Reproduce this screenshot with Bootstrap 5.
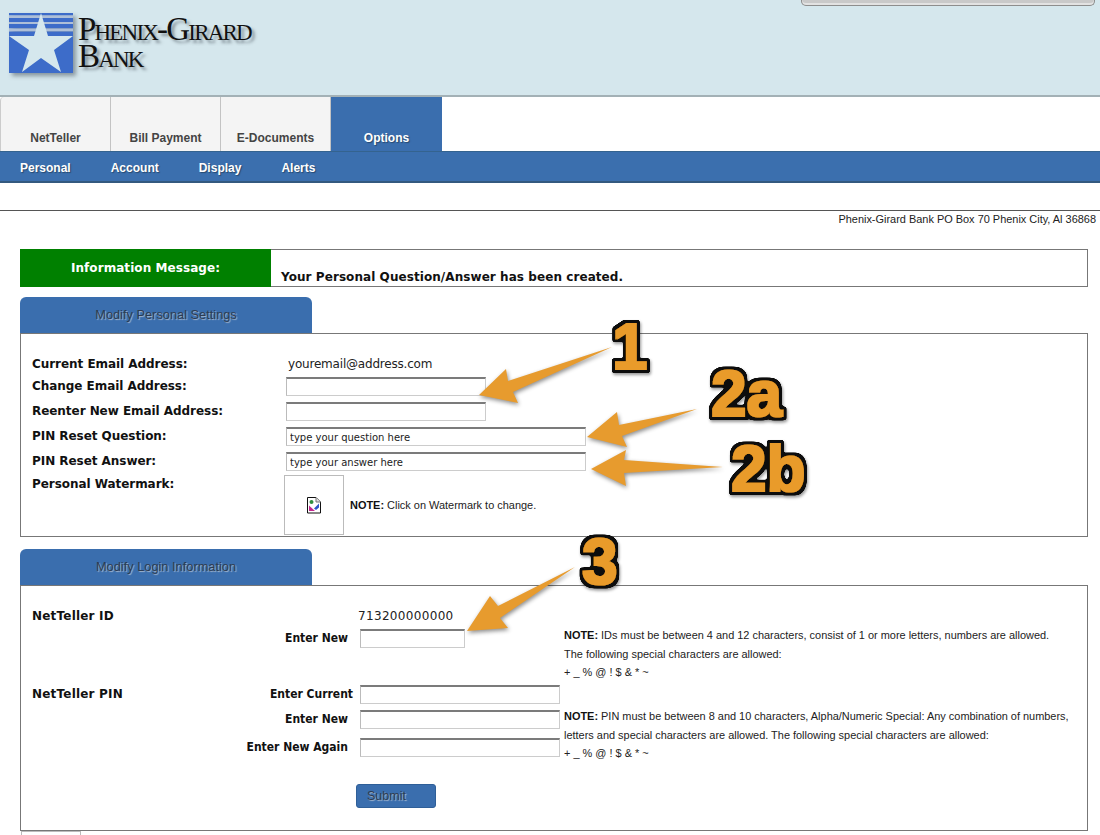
<!DOCTYPE html>
<html lang="en">
<head>
<meta charset="utf-8">
<title>Phenix-Girard Bank</title>
<link rel="stylesheet" href="https://cdn.jsdelivr.net/npm/bootstrap@5.3.0/dist/css/bootstrap.min.css">
<style>
html,body{height:835px;overflow:hidden;background:#fff;margin:0}
body{font-family:"Liberation Sans",Arial,sans-serif;color:#111;position:relative}
.pg-head{height:97px;background:#d5e7ed;border-bottom:2px solid #a3b1b6}
.logo-mark{width:76px;height:70px;margin:11px 0 0 9px;filter:drop-shadow(3px 3px 2px rgba(60,70,80,.5));flex:none}
.logo-text{font-family:"Liberation Serif",serif;color:#111;font-variant:small-caps;font-size:33px;line-height:27px;letter-spacing:-1.8px;margin:16px 0 0 -7px;text-shadow:3px 3px 3px rgba(60,70,80,.5)}
.search-stub{width:294px;height:6px;margin:0 5px 0 auto;background:#c9c9c9;border:1px solid #8d8d8d;border-top:0;border-radius:0 0 5px 5px;box-shadow:inset 0 -2px 0 #e2e2e2}
.tab-bar{height:54px;padding-left:0;margin:0}
.tab-item{width:110px;height:54px;background:#f4f4f4;border-right:1px solid #c3c3c3;font-weight:700;font-size:12px;color:#444;text-align:center;padding:28px 0 0;line-height:26px}
.tab-item:first-child{border-left:1px solid #ccc;border-radius:4px 0 0 0;width:111px}
.tab-active{background:#3a6eae;color:#fff;text-shadow:1px 1px 1px #27496f;border-right:0;width:111px}
.sub-bar{height:32px;background:#3b6fae;border-bottom:2px solid #33597f;border-top:1px solid #34638f}
.sub-link{font-weight:700;font-size:12px;color:#fff;text-shadow:1px 1px 1px #27496f;line-height:32px;margin-left:40px}
.sub-link:first-child{margin-left:20px}
.addr-line{margin-top:27px;border-top:1px solid #555;font-size:10.95px;text-align:right;padding:1px 4px 0 0;line-height:14px;color:#222;height:39px}
.wrap{margin:0 12px 0 20px}
.msg-box{height:38px;border:1px solid #777;font-family:"DejaVu Sans",Verdana,sans-serif;font-weight:700;font-size:12px;letter-spacing:.07px}
.msg-title{width:251px;background:#008000;color:#fff;text-align:center;line-height:15px;padding-top:12px;margin:-1px 0 -1px -1px;box-sizing:content-box;height:26px;flex:none}
.msg-text{padding:20px 0 0 10px;line-height:15px;color:#111}
.sec-tab{width:292px;height:36px;margin-top:10px;background:#3a6eae;border-radius:6px 6px 0 0;text-align:center;font-size:12.8px;line-height:35px;color:#2c3c52;text-shadow:1px 1px 1px #a9bacf}
.sec-tab.second{margin-top:12px}
.sec-box{border:1px solid #777;padding:19px 0 0 11px}
.sec-one{height:204px}
.sec-two{height:246px}
.lab{font-family:"DejaVu Sans",Verdana,sans-serif;font-weight:700;font-size:12px;line-height:20px;color:#111;margin-top:1px;letter-spacing:-.05px}
.val{font-family:"DejaVu Sans",Verdana,sans-serif;font-size:12px;line-height:20px;color:#222;margin-top:1px}
.val-mail{letter-spacing:-.2px;margin-left:2px}
.val-id{letter-spacing:.33px;margin-left:-2px}
.lab-name{letter-spacing:.2px}
.lab-enter{font-family:"DejaVu Sans Condensed","DejaVu Sans",sans-serif;letter-spacing:0}
.fld{display:block;padding:0 3px;height:19px;font-family:"DejaVu Sans",Verdana,sans-serif;font-size:10px;color:#222;border:1px solid #ccc;border-top:2px solid #7b7b7b;border-left-color:#bbb;border-radius:0;background:#fff;box-shadow:none;margin-top:2px}
.w200{width:200px}.w300{width:300px}.w105{width:105px}
.row-a{height:22px}
.row-b{height:25px}
.c-label{width:254px;flex:none}
.lab-wm{margin-top:-1px}
.wm-box{width:60px;height:60px;border:1px solid #bbb;margin-left:-2px}
.note{font-size:10.95px;line-height:18.5px;color:#222}
.note b{color:#111}
.note-wm{margin-left:6px}
.note-id{margin-left:99px;width:530px;margin-top:-1px}
.note-pin{width:530px;margin:24px 0 0 4px}
.lg-left{width:328px;flex:none}
.lg-name{width:150px;flex:none}
.lg-cur{width:171px;text-align:right;flex:none}
.lg-curfld{margin-left:7px}
.lg-right{text-align:right;padding-right:12px}
.row-gap{margin-top:3px}
.id-row{height:56px}
.submit-btn{width:80px;height:24px;padding:0 0 0 10px;margin:21px 0 0 324px;display:block;text-align:left;background:#3a6eae;border:1px solid #2f5f98;border-radius:3px;font-size:12.5px;line-height:22px;color:#2c3c52;text-shadow:1px 1px 1px #a9bacf}
.foot-stub{width:60px;height:30px;border:1px solid #bbb;margin:0 0 0 1px}
.marks{position:absolute;left:0;top:0;width:1100px;height:835px;pointer-events:none}
.mark-num{font-family:"Liberation Sans",Arial,sans-serif;font-weight:700;font-size:64px;fill:#e99b2b}
.mark-arrow{fill:#e79b2e}
.mark-shade{filter:drop-shadow(1px 2px 2px rgba(0,0,0,.45))}
</style>
</head>
<body>
<header class="pg-head d-flex align-items-start">
  <svg class="logo-mark" viewBox="9 11 76 70" aria-label="Phenix-Girard Bank logo">
    <rect x="9" y="13" width="64" height="2.5" fill="#3d6cc9"/>
    <rect x="9" y="15.5" width="64" height="2.5" fill="#aebfd8"/>
    <rect x="9" y="18" width="64" height="4" fill="#3d6cc9"/>
    <rect x="9" y="22" width="64" height="2" fill="#aebfd8"/>
    <rect x="9" y="24" width="64" height="4.5" fill="#3d6cc9"/>
    <rect x="9" y="28.5" width="64" height="3" fill="#aebfd8"/>
    <rect x="9" y="31.5" width="64" height="41.5" fill="#3d6cc9"/>
    <polygon points="41,13 48,36 73,36 54,50 61,72 41,58 22,72 29,50 9,36 34,36" fill="#d5e7ed"/>
  </svg>
  <div class="logo-text">Phenix-Girard<br>Bank</div>
  <div class="search-stub"></div>
</header>
<nav class="tab-bar d-flex" aria-label="Main">
  <div class="tab-item">NetTeller</div>
  <div class="tab-item">Bill Payment</div>
  <div class="tab-item">E-Documents</div>
  <div class="tab-item tab-active">Options</div>
</nav>
<nav class="sub-bar d-flex" aria-label="Section">
  <span class="sub-link">Personal</span>
  <span class="sub-link">Account</span>
  <span class="sub-link">Display</span>
  <span class="sub-link">Alerts</span>
</nav>
<div class="addr-line">Phenix-Girard Bank PO Box 70 Phenix City, Al 36868</div>
<main class="wrap">
  <div class="msg-box d-flex">
    <div class="msg-title">Information Message:</div>
    <div class="msg-text">Your Personal Question/Answer has been created.</div>
  </div>
  <div class="sec-tab">Modify Personal Settings</div>
  <section class="sec-box sec-one">
    <div class="d-flex row-a"><div class="lab c-label">Current Email Address:</div><div class="val val-mail">youremail@address.com</div></div>
    <div class="d-flex row-b"><div class="lab c-label">Change Email Address:</div><input class="form-control fld w200" type="text"></div>
    <div class="d-flex row-b"><div class="lab c-label">Reenter New Email Address:</div><input class="form-control fld w200" type="text"></div>
    <div class="d-flex row-b"><div class="lab c-label">PIN Reset Question:</div><input class="form-control fld w300" type="text" value="type your question here"></div>
    <div class="d-flex row-b"><div class="lab c-label">PIN Reset Answer:</div><input class="form-control fld w300" type="text" value="type your answer here"></div>
    <div class="d-flex">
      <div class="lab c-label lab-wm">Personal Watermark:</div>
      <div class="wm-box d-flex align-items-center justify-content-center">
        <svg width="16" height="17" viewBox="0 0 16 17" aria-hidden="true">
          <path d="M1.5.5H10L14.5 5V16H1.5Z" fill="#fff" stroke="#111"/>
          <path d="M10 .5V5H14.5" fill="#ddd" stroke="#777"/>
          <rect x="3.5" y="3" width="4" height="4" rx="2" fill="#2f8f3f"/>
          <path d="M3 14V8.5L9 14Z" fill="#c2278e"/>
          <path d="M8 11.5L13 6.5V10.5L10 13Z" fill="#2e56c8"/>
        </svg>
      </div>
      <div class="note note-wm align-self-center"><b>NOTE:</b> Click on Watermark to change.</div>
    </div>
  </section>
  <div class="sec-tab second">Modify Login Information</div>
  <section class="sec-box sec-two">
    <div class="d-flex row-a"><div class="lab lab-name lg-left">NetTeller ID</div><div class="val val-id">713200000000</div></div>
    <div class="d-flex id-row">
      <div class="lab lab-enter lg-left lg-right">Enter New</div>
      <input class="form-control fld w105" type="text">
      <div class="note note-id"><b>NOTE:</b> IDs must be between 4 and 12 characters, consist of 1 or more letters, numbers are allowed.<br>The following special characters are allowed:<br>+ _ % @ ! $ &amp; * ~</div>
    </div>
    <div class="d-flex">
      <div>
        <div class="d-flex row-b"><div class="lab lab-name lg-name">NetTeller PIN</div><div class="lab lab-enter lg-cur">Enter Current</div><input class="form-control fld w200 lg-curfld" type="text"></div>
        <div class="d-flex row-b"><div class="lab lab-enter lg-left lg-right">Enter New</div><input class="form-control fld w200" type="text"></div>
        <div class="d-flex row-b row-gap"><div class="lab lab-enter lg-left lg-right">Enter New Again</div><input class="form-control fld w200" type="text"></div>
      </div>
      <div class="note note-pin"><b>NOTE:</b> PIN must be between 8 and 10 characters, Alpha/Numeric Special: Any combination of numbers,<br>letters and special characters are allowed. The following special characters are allowed:<br>+ _ % @ ! $ &amp; * ~</div>
    </div>
    <button type="button" class="btn submit-btn">Submit</button>
  </section>
  <div class="foot-stub"></div>
</main>
<svg class="marks" viewBox="0 0 1100 835" aria-label="Numbered callouts">
  <defs>
    <filter id="heavy" x="-30%" y="-30%" width="160%" height="160%">
      <feMorphology in="SourceGraphic" operator="dilate" radius="1.2" result="fat"/>
      <feMorphology in="SourceAlpha" operator="dilate" radius="4.2" result="halo"/>
      <feGaussianBlur in="halo" stdDeviation="1.2" result="soft"/>
      <feComponentTransfer in="soft" result="edge"><feFuncA type="linear" slope="6" intercept="-2.4"/></feComponentTransfer>
      <feFlood flood-color="#0c0c0c"/>
      <feComposite in2="edge" operator="in" result="black"/>
      <feOffset in="edge" dx="1" dy="2" result="off"/>
      <feGaussianBlur in="off" stdDeviation="1.5" result="blur"/>
      <feFlood flood-color="#000" flood-opacity=".4"/>
      <feComposite in2="blur" operator="in" result="shadow"/>
      <feMerge><feMergeNode in="shadow"/><feMergeNode in="black"/><feMergeNode in="fat"/></feMerge>
    </filter>
  </defs>
  <g class="mark-shade">
    <polygon class="mark-arrow" points="612,347 508,381 506,369 479,395 518,403 513,392"/>
    <polygon class="mark-arrow" points="697,409 619,425 617,412 587,437 627,447 622,436"/>
    <polygon class="mark-arrow" points="723,467 624,460 626,450 591,469 626,486 624,473"/>
    <polygon class="mark-arrow" points="575,567 498,606 490,596 467,631 508,628 500,618"/>
  </g>
  <text class="mark-num" filter="url(#heavy)" x="612" y="369">1</text>
  <text class="mark-num" filter="url(#heavy)" x="711" y="416">2a</text>
  <text class="mark-num" filter="url(#heavy)" x="731" y="491">2b</text>
  <text class="mark-num" filter="url(#heavy)" x="582" y="584">3</text>
</svg>
</body>
</html>
